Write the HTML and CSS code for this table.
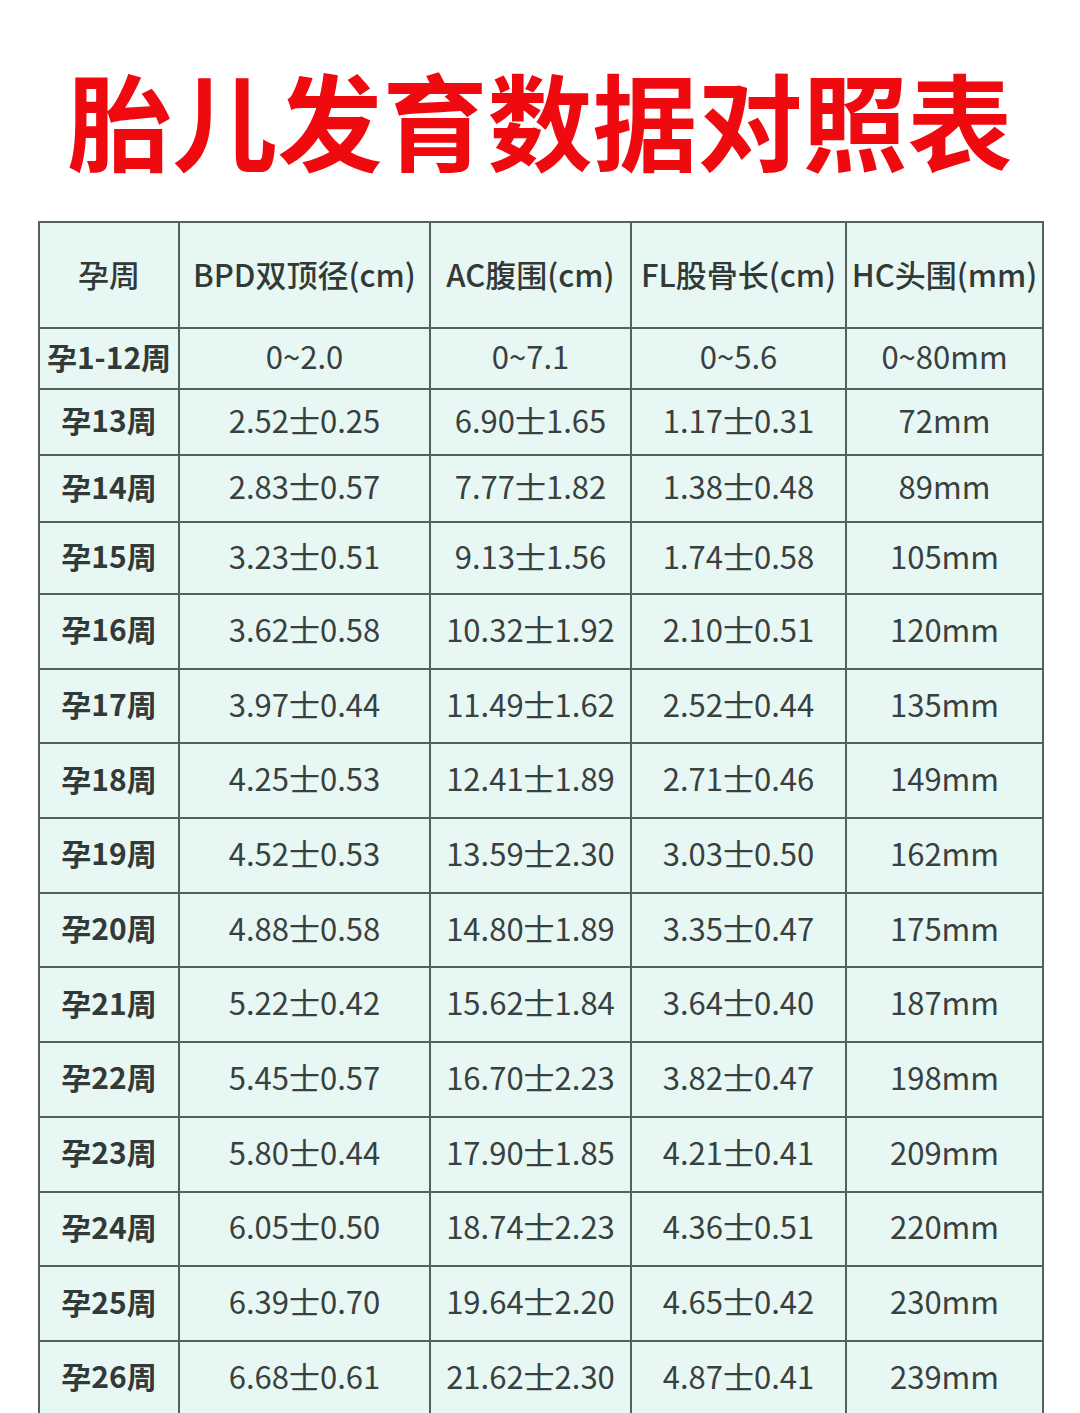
FILE: index.html
```html
<!DOCTYPE html>
<html lang="zh-CN">
<head>
<meta charset="utf-8">
<link rel="stylesheet" href="styles.css">
</head>
<body>
<div class="page">
  <h1 class="title">胎儿发育数据对照表</h1>
  <table class="data">
    <colgroup>
      <col class="c1"><col class="c2"><col class="c3"><col class="c4"><col class="c5">
    </colgroup>
    <thead>
      <tr class="r-head"><th>孕周</th><th>BPD双顶径(cm)</th><th>AC腹围(cm)</th><th>FL股骨长(cm)</th><th>HC头围(mm)</th></tr>
    </thead>
    <tbody>
      <tr class="r1"><th>孕1-12周</th><td>0~2.0</td><td>0~7.1</td><td>0~5.6</td><td>0~80mm</td></tr>
      <tr class="r2"><th>孕13周</th><td>2.52士0.25</td><td>6.90士1.65</td><td>1.17士0.31</td><td>72mm</td></tr>
      <tr class="r3"><th>孕14周</th><td>2.83士0.57</td><td>7.77士1.82</td><td>1.38士0.48</td><td>89mm</td></tr>
      <tr class="r4"><th>孕15周</th><td>3.23士0.51</td><td>9.13士1.56</td><td>1.74士0.58</td><td>105mm</td></tr>
      <tr class="rn"><th>孕16周</th><td>3.62士0.58</td><td>10.32士1.92</td><td>2.10士0.51</td><td>120mm</td></tr>
      <tr class="rn"><th>孕17周</th><td>3.97士0.44</td><td>11.49士1.62</td><td>2.52士0.44</td><td>135mm</td></tr>
      <tr class="rn"><th>孕18周</th><td>4.25士0.53</td><td>12.41士1.89</td><td>2.71士0.46</td><td>149mm</td></tr>
      <tr class="rn"><th>孕19周</th><td>4.52士0.53</td><td>13.59士2.30</td><td>3.03士0.50</td><td>162mm</td></tr>
      <tr class="rn"><th>孕20周</th><td>4.88士0.58</td><td>14.80士1.89</td><td>3.35士0.47</td><td>175mm</td></tr>
      <tr class="rn"><th>孕21周</th><td>5.22士0.42</td><td>15.62士1.84</td><td>3.64士0.40</td><td>187mm</td></tr>
      <tr class="rn"><th>孕22周</th><td>5.45士0.57</td><td>16.70士2.23</td><td>3.82士0.47</td><td>198mm</td></tr>
      <tr class="rn"><th>孕23周</th><td>5.80士0.44</td><td>17.90士1.85</td><td>4.21士0.41</td><td>209mm</td></tr>
      <tr class="rn"><th>孕24周</th><td>6.05士0.50</td><td>18.74士2.23</td><td>4.36士0.51</td><td>220mm</td></tr>
      <tr class="rn"><th>孕25周</th><td>6.39士0.70</td><td>19.64士2.20</td><td>4.65士0.42</td><td>230mm</td></tr>
      <tr class="rn"><th>孕26周</th><td>6.68士0.61</td><td>21.62士2.30</td><td>4.87士0.41</td><td>239mm</td></tr>
    </tbody>
  </table>
</div>
</body>
</html>
```

FILE: styles.css
```css
html, body {
  margin: 0;
  padding: 0;
  background: #ffffff;
}
body {
  font-family: "Noto Sans CJK SC", "Noto Sans", sans-serif;
  color: #353b39;
}
.page {
  width: 1080px;
  height: 1413px;
  overflow: hidden;
}
.title {
  margin: 0;
  height: 221px;
  display: flex;
  align-items: center;
  justify-content: center;
  font-size: 105px;
  font-weight: 700;
  line-height: 1;
  color: #ee0a0f;
  letter-spacing: 0;
  padding-top: 14px;
  box-sizing: border-box;
}
.data {
  margin-left: 38px;
  width: 1004px;
  table-layout: fixed;
  border-collapse: collapse;
  background: #e7f8f4;
}
.c1 { width: 140px; }
.c2 { width: 251px; }
.c3 { width: 201px; }
.c4 { width: 215px; }
.c5 { width: 197px; }
.data th, .data td {
  border: 2px solid #53625d;
  padding: 0 0 6px 0;
  text-align: center;
  vertical-align: middle;
  white-space: nowrap;
  line-height: 1;
}
.data td {
  font-size: 31px;
  font-weight: 400;
  color: #3a403e;
}
.data tbody th {
  font-size: 30px;
  font-weight: 700;
  color: #333937;
}
.data thead th {
  font-size: 31px;
  font-weight: 500;
  color: #333937;
  padding-bottom: 4px;
}
.r-head { height: 106px; }
.r1 { height: 61px; }
.r2 { height: 66px; }
.r3 { height: 67px; }
.r4 { height: 72px; }
.rn { height: 74.7px; }
```
